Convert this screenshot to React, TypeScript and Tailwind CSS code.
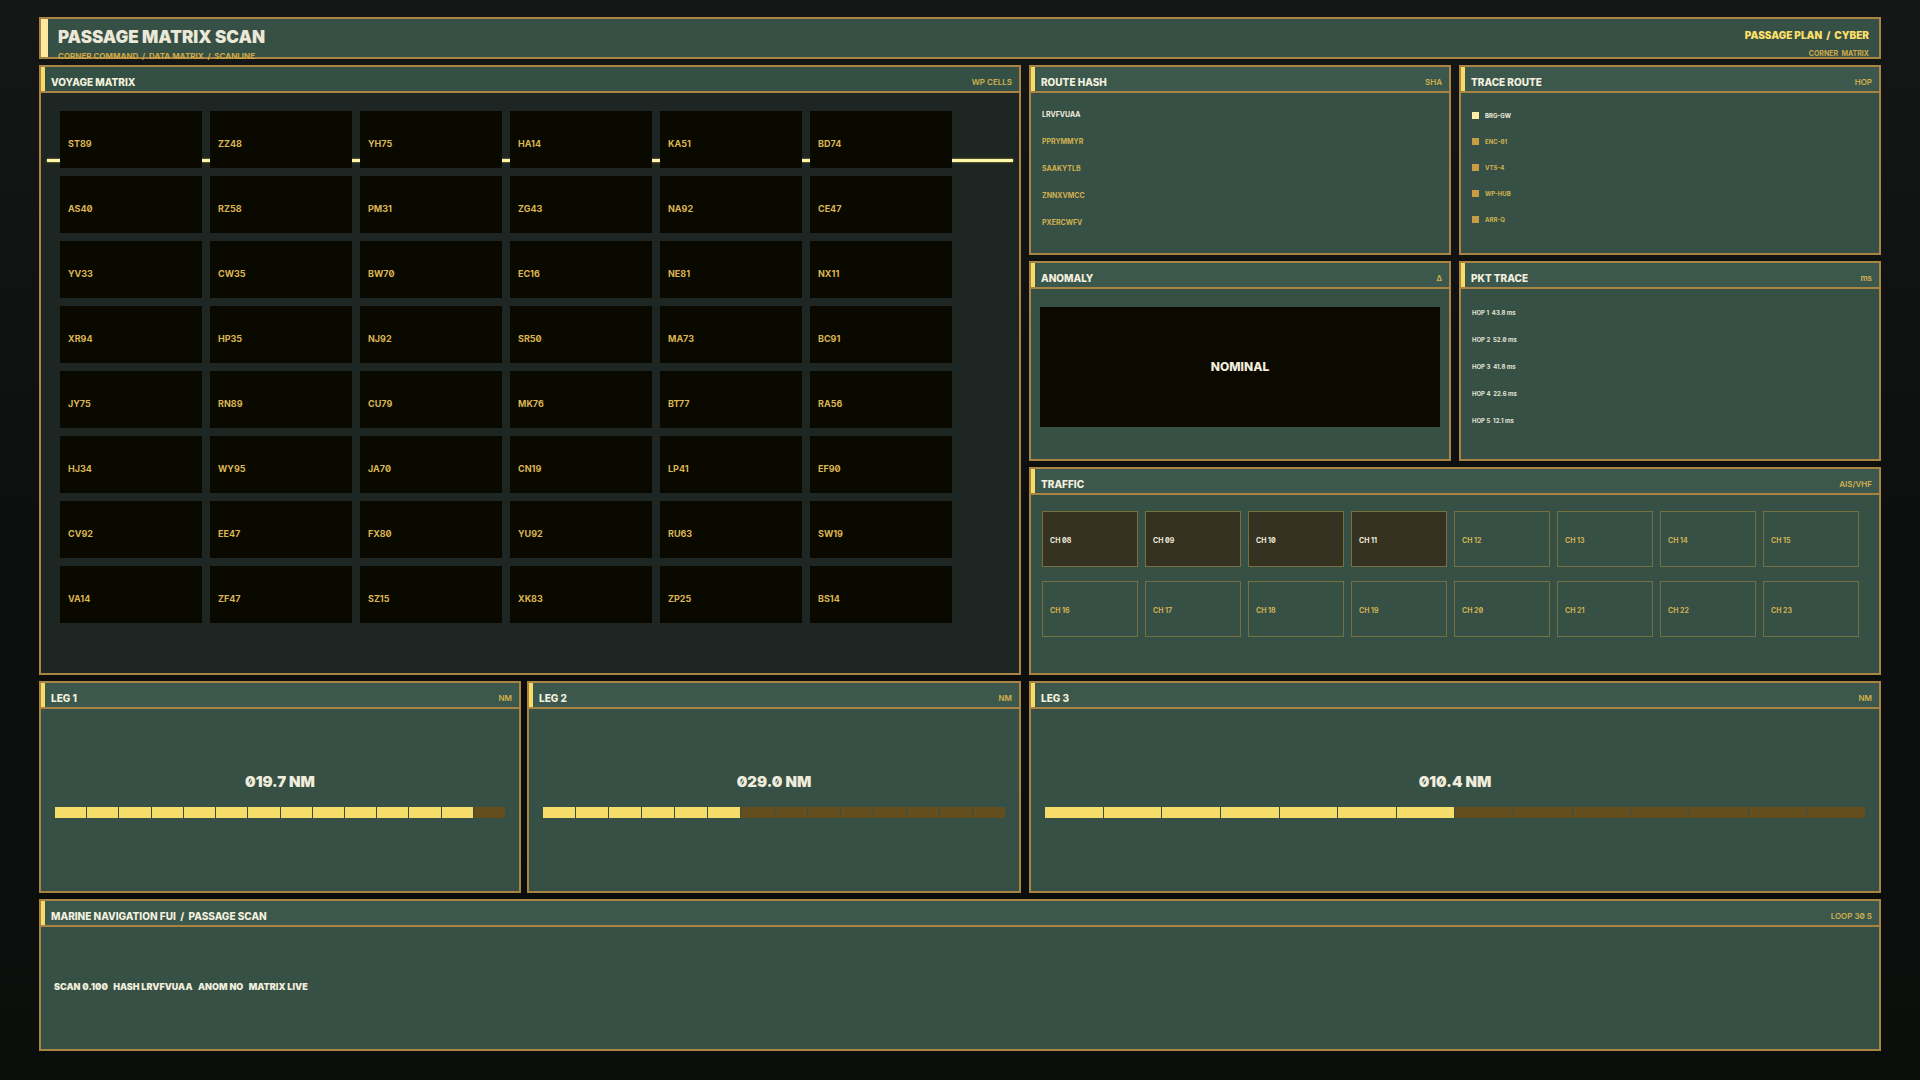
import React from "react";

const voyageRows = [
  ["ST89", "ZZ48", "YH75", "HA14", "KA51", "BD74"],
  ["AS40", "RZ58", "PM31", "ZG43", "NA92", "CE47"],
  ["YV33", "CW35", "BW70", "EC16", "NE81", "NX11"],
  ["XR94", "HP35", "NJ92", "SR50", "MA73", "BC91"],
  ["JY75", "RN89", "CU79", "MK76", "BT77", "RA56"],
  ["HJ34", "WY95", "JA70", "CN19", "LP41", "EF90"],
  ["CV92", "EE47", "FX80", "YU92", "RU63", "SW19"],
  ["VA14", "ZF47", "SZ15", "XK83", "ZP25", "BS14"],
];

const hashes = ["LRVFVUAA", "PPRYMMYR", "SAAKYTLB", "ZNNXVMCC", "PXERCWFV"];
const hops = ["BRG-GW", "ENC-01", "VTS-4", "WP-HUB", "ARR-Q"];
const packets = ["43.8", "52.0", "41.8", "22.6", "12.1"];

const channels = [
  "08", "09", "10", "11", "12", "13", "14", "15",
  "16", "17", "18", "19", "20", "21", "22", "23",
];
const ACTIVE_CHANNELS = 4;
const SEGMENTS = 14;

interface PanelProps {
  title: string;
  tag: string;
  dark?: boolean;
  children: React.ReactNode;
}

const Panel: React.FC<PanelProps> = ({ title, tag, dark, children }) => (
  <section
    className={`flex min-w-0 flex-col border-2 border-[#a98442] ${
      dark ? "bg-[#1d2622]" : "bg-[#375045]"
    }`}
  >
    <header
      className={`flex h-[26px] shrink-0 border-b-2 border-[#a98442] ${
        dark ? "bg-[#345044]" : "bg-[#3c584c]"
      }`}
    >
      <div className="w-1 bg-[#f9dc66]" />
      <div className="flex flex-1 items-center justify-between pt-1.5 pl-1.5 pr-[7px]">
        <h2 className="text-[10px] leading-4 font-extrabold whitespace-pre text-[#f3f0df]">{title}</h2>
        <span className="text-[8px] leading-4 font-semibold text-[#d2b14f]">{tag}</span>
      </div>
    </header>
    {children}
  </section>
);

interface LegProps {
  title: string;
  distance: string;
  filled: number;
}

const Leg: React.FC<LegProps> = ({ title, distance, filled }) => (
  <Panel title={title} tag="NM">
    <div className="px-3.5 pt-[63px]">
      <p className="text-center text-[15px] leading-5 font-black text-[#f0eddc]">{distance}</p>
      <div
        role="meter"
        aria-label={title}
        aria-valuemin={0}
        aria-valuemax={SEGMENTS}
        aria-valuenow={filled}
        className="mt-[15px] flex h-[11px] gap-px"
      >
        {Array.from({ length: SEGMENTS }, (_, i) => (
          <div key={i} className={`flex-1 ${i < filled ? "bg-[#f6dd6a]" : "bg-[#654e1d]"}`} />
        ))}
      </div>
    </div>
  </Panel>
);

const App: React.FC = () => {
  return (
    <main className="grid min-h-screen grid-rows-[42px_610fr_212fr_152fr] gap-1.5 bg-linear-to-b from-[#151716] via-[#0d0f0e] to-[#0b0e0b] px-[39px] pt-[17px] pb-[29px] font-['Inter',sans-serif] [font-feature-settings:'zero']">
      <header className="flex border-2 border-[#a98442] bg-[#375045]">
        <div className="w-[7px] bg-[#ffe9a0]" />
        <div className="flex flex-1 justify-between px-2.5 pt-2">
          <div>
            <h1 className="text-[17px] leading-5 font-black text-[#ebe8d8]">PASSAGE MATRIX SCAN</h1>
            <p className="mt-[3px] text-[8px] leading-3 font-bold whitespace-pre text-[#d0a845]">
              {"CORNER COMMAND  /  DATA MATRIX  /  SCANLINE"}
            </p>
          </div>
          <div className="text-right">
            <p className="text-[10px] leading-4 font-black whitespace-pre text-[#f9df69]">
              {"PASSAGE PLAN  /  CYBER"}
            </p>
            <p className="mt-[5px] text-[7px] leading-3 font-bold whitespace-pre text-[#cda94a]">
              {"CORNER  MATRIX"}
            </p>
          </div>
        </div>
      </header>

      <div className="grid grid-cols-[982fr_852fr] gap-2">
        <Panel title="VOYAGE MATRIX" tag="WP CELLS" dark>
          <div className="relative pt-[18px] pr-[67px] pl-[19px]">
            {/* scanline runs behind the cells */}
            <div className="absolute top-[66px] right-1.5 left-1.5 h-[3px] bg-[#fff7a6] shadow-[0_0_2px_#c9b55a]" />
            <ul className="relative grid grid-cols-6 gap-2">
              {voyageRows.flat().map((cell) => (
                <li
                  key={cell}
                  className="flex h-[57px] items-center bg-[#090900] pt-2 pl-2 text-[9px] leading-3 font-bold text-[#dcb552]"
                >
                  {cell}
                </li>
              ))}
            </ul>
          </div>
        </Panel>

        <div className="grid grid-cols-2 grid-rows-[190fr_200fr_208fr] gap-x-2 gap-y-1.5">
          <Panel title="ROUTE HASH" tag="SHA">
            <ul className="space-y-[15px] pt-4 pl-[11px] text-[7px] leading-3 font-bold text-[#d2b14f]">
              {hashes.map((hash, i) => (
                <li key={hash} className={i === 0 ? "text-[#f0eddc]" : ""}>
                  {hash}
                </li>
              ))}
            </ul>
          </Panel>

          <Panel title="TRACE ROUTE" tag="HOP">
            <ul className="space-y-3.5 pt-4 pl-[11px] text-[6px] leading-3 font-bold text-[#d2b14f]">
              {hops.map((hop, i) => (
                <li key={hop} className="flex h-3 items-center gap-1.5">
                  <span className={`size-[7px] ${i === 0 ? "bg-[#fceca4]" : "bg-[#c79c44]"}`} />
                  <span className={`pt-0.5 ${i === 0 ? "text-[#f0eddc]" : ""}`}>{hop}</span>
                </li>
              ))}
            </ul>
          </Panel>

          <Panel title="ANOMALY" tag="Δ">
            <div className="px-[9px] pt-[18px]">
              <p className="flex h-[120px] items-center justify-center bg-[#0c0900] text-[12px] leading-5 font-extrabold text-[#f0eddc]">
                NOMINAL
              </p>
            </div>
          </Panel>

          <Panel title="PKT TRACE" tag="ms">
            <ul className="space-y-[15px] pt-[18px] pl-[11px] text-[6px] leading-3 font-bold whitespace-pre text-[#e2e3d4]">
              {packets.map((ms, i) => (
                <li key={ms}>{`HOP ${i + 1}  ${ms} ms`}</li>
              ))}
            </ul>
          </Panel>

          <div className="col-span-2 grid">
            <Panel title="TRAFFIC" tag="AIS/VHF">
              <ul className="grid grid-cols-8 gap-x-[7px] gap-y-3.5 pt-4 pr-5 pl-[11px]">
                {channels.map((ch, i) => (
                  <li
                    key={ch}
                    className={`flex h-14 items-center border pt-1 pl-[7px] text-[7px] leading-3 font-bold ${
                      i < ACTIVE_CHANNELS
                        ? "border-[#77713f] bg-[#353222] text-[#f0eddc]"
                        : "border-[#75703f] text-[#d2b14f]"
                    }`}
                  >
                    CH {ch}
                  </li>
                ))}
              </ul>
            </Panel>
          </div>
        </div>
      </div>

      <div className="grid grid-cols-[982fr_852fr] gap-2">
        <div className="grid grid-cols-[482fr_494fr] gap-1.5">
          <Leg title="LEG 1" distance="019.7 NM" filled={13} />
          <Leg title="LEG 2" distance="029.0 NM" filled={6} />
        </div>
        <Leg title="LEG 3" distance="010.4 NM" filled={7} />
      </div>

      <Panel title={"MARINE NAVIGATION FUI  /  PASSAGE SCAN"} tag="LOOP 30 S">
        <p className="flex flex-1 items-center pb-0.5 pl-[13px] text-[9px] leading-4 font-black whitespace-pre text-[#f0eddc]">
          {"SCAN 0.100   HASH LRVFVUAA   ANOM NO   MATRIX LIVE"}
        </p>
      </Panel>
    </main>
  );
};

export default App;
